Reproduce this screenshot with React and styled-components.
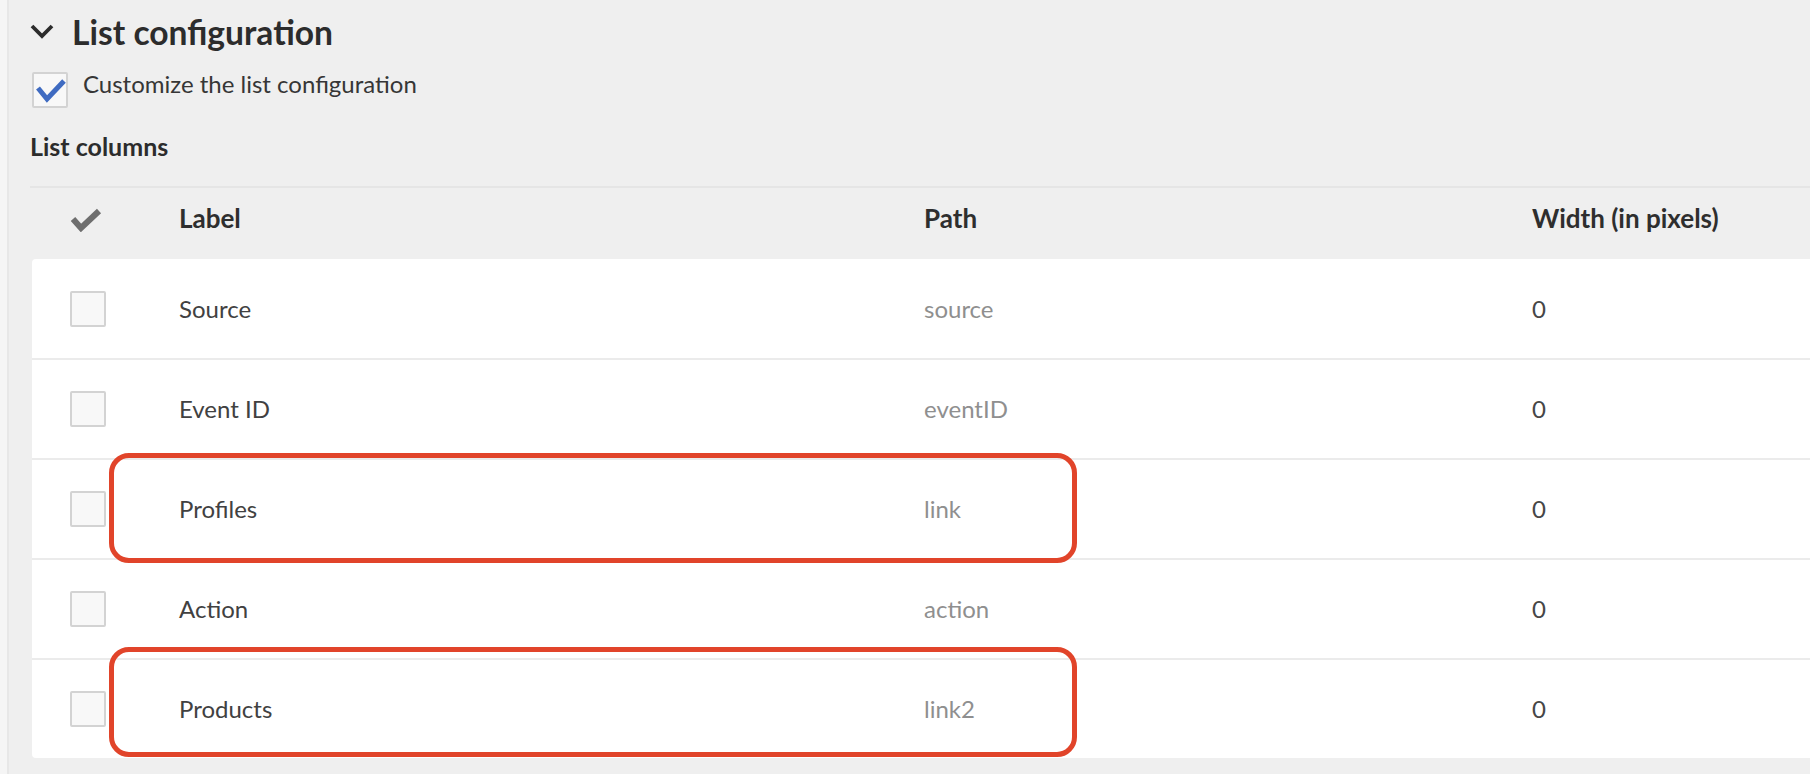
import React from "react";
import styled, { createGlobalStyle } from "styled-components";

const rows = [
  { label: "Source", path: "source", width: "0" },
  { label: "Event ID", path: "eventID", width: "0" },
  { label: "Profiles", path: "link", width: "0" },
  { label: "Action", path: "action", width: "0" },
  { label: "Products", path: "link2", width: "0" },
];

// hand-drawn annotation boxes over the table (offsets from the table body)
const highlights = [
  { top: 194, left: 77, width: 968 },
  { top: 388, left: 77, width: 968 },
];

const App = () => {
  return (
    <Page>
      <GlobalStyle />
      <SideStrip />
      <Panel>
        <TitleRow>
          <Chevron viewBox="0 0 24 16">
            <polyline points="2,3 12,13 22,3" />
          </Chevron>
          <Title>List configuration</Title>
        </TitleRow>

        <OptionRow>
          <CheckBox>
            <BlueTick viewBox="0 0 36 36">
              <polyline points="6,16 15,27 32,9" />
            </BlueTick>
          </CheckBox>
          <OptionText>Customize the list configuration</OptionText>
        </OptionRow>

        <SectionLabel>List columns</SectionLabel>

        <Table>
          <HeaderRow>
            <HeaderCell>
              <HeaderTick viewBox="0 0 32 24">
                <polyline points="3,11 11,20 29,3" />
              </HeaderTick>
            </HeaderCell>
            <HeaderCell>Label</HeaderCell>
            <HeaderCell>Path</HeaderCell>
            <HeaderCell>Width (in pixels)</HeaderCell>
          </HeaderRow>

          <Body>
            {rows.map((row, index) => {
              return (
                <Row key={index}>
                  <CheckCell>
                    <CheckBox />
                  </CheckCell>
                  <LabelCell>{row.label}</LabelCell>
                  <PathCell>{row.path}</PathCell>
                  <WidthCell>{row.width}</WidthCell>
                </Row>
              );
            })}
            {highlights.map((box, index) => (
              <Highlight
                key={index}
                style={{ top: box.top, left: box.left, width: box.width }}
              />
            ))}
          </Body>
        </Table>
      </Panel>
    </Page>
  );
};

const GlobalStyle = createGlobalStyle`
  html, body {
    margin: 0;
    padding: 0;
    height: 100%;
    background: #f5f5f5;
    font-family: Lato, "Open Sans", sans-serif;
    overflow: hidden;
  }
  #root {
    height: 100%;
  }
`;

const Page = styled.div`
  display: flex;
  width: 1810px;
  height: 774px;
  overflow: hidden;
`;

const SideStrip = styled.div`
  width: 7px;
  flex-shrink: 0;
  background: #f5f5f5;
  border-right: 2px solid #e7e7e7;
`;

const Panel = styled.div`
  flex: 1;
  display: flex;
  flex-direction: column;
  background: #efefef;
  padding: 12px 0 0 21px;
  min-width: 0;
`;

const TitleRow = styled.div`
  display: flex;
  align-items: center;
  height: 40px;
`;

const Chevron = styled.svg`
  width: 24px;
  height: 16px;
  margin-right: 18px;
  margin-top: -3px;
  fill: none;
  stroke: #2c2c2c;
  stroke-width: 3.8;
`;

const Title = styled.h2`
  margin: 0;
  font-size: 33.6px;
  line-height: 40px;
  font-weight: 700;
  color: #2c2c2c;
`;

const OptionRow = styled.div`
  display: flex;
  align-items: flex-start;
  margin-top: 17px;
  padding-left: 2px;
`;

const CheckBox = styled.span`
  display: block;
  width: 36px;
  height: 36px;
  box-sizing: border-box;
  border: 2px solid #d3d3d3;
  border-radius: 2px;
  background: #f8f8f8;
  flex-shrink: 0;
  ${OptionRow} & {
    margin-top: 3px;
  }
`;

const BlueTick = styled.svg`
  display: block;
  width: 36px;
  height: 36px;
  margin: -2px;
  fill: none;
  stroke: #3f6bc1;
  stroke-width: 5;
`;

const OptionText = styled.span`
  margin-left: 15px;
  font-size: 24px;
  line-height: 30px;
  color: #363636;
`;

const SectionLabel = styled.div`
  margin-top: 23px;
  font-size: 25px;
  line-height: 30px;
  font-weight: 700;
  color: #2c2c2c;
`;

const Table = styled.div`
  margin-top: 25px;
  display: flex;
  flex-direction: column;
`;

const columns = `147px 745px 608px 1fr`;

const HeaderRow = styled.div`
  display: grid;
  grid-template-columns: ${columns};
  box-sizing: border-box;
  height: 73px;
  border-top: 2px solid #e5e5e5;
  padding: 14px 0 0 2px;
`;

const HeaderCell = styled.div`
  font-size: 26px;
  line-height: 32px;
  font-weight: 700;
  color: #2e2e2e;
  white-space: nowrap;
`;

const HeaderTick = styled.svg`
  display: block;
  width: 32px;
  height: 24px;
  margin: 6px 0 0 38px;
  fill: none;
  stroke: #6e6e6e;
  stroke-width: 6;
`;

const Body = styled.div`
  position: relative;
  margin-left: 2px;
  background: #ffffff;
  border-radius: 4px 0 0 4px;
`;

const Row = styled.div`
  display: grid;
  grid-template-columns: ${columns};
  align-items: center;
  box-sizing: border-box;
  height: 99px;
  font-size: 24px;
  line-height: 30px;

  & + & {
    border-top: 2px solid #ebebeb;
    height: 100px;
  }
  &:last-of-type {
    height: 97px;
  }
`;

const CheckCell = styled.div`
  padding-left: 38px;
`;

const LabelCell = styled.div`
  color: #414141;
`;

const PathCell = styled.div`
  color: #8f8f8f;
`;

const WidthCell = styled.div`
  color: #464646;
`;

const Highlight = styled.div`
  position: absolute;
  height: 110px;
  box-sizing: border-box;
  border: 5px solid #e1442a;
  border-radius: 20px;
  pointer-events: none;
`;

export default App;
